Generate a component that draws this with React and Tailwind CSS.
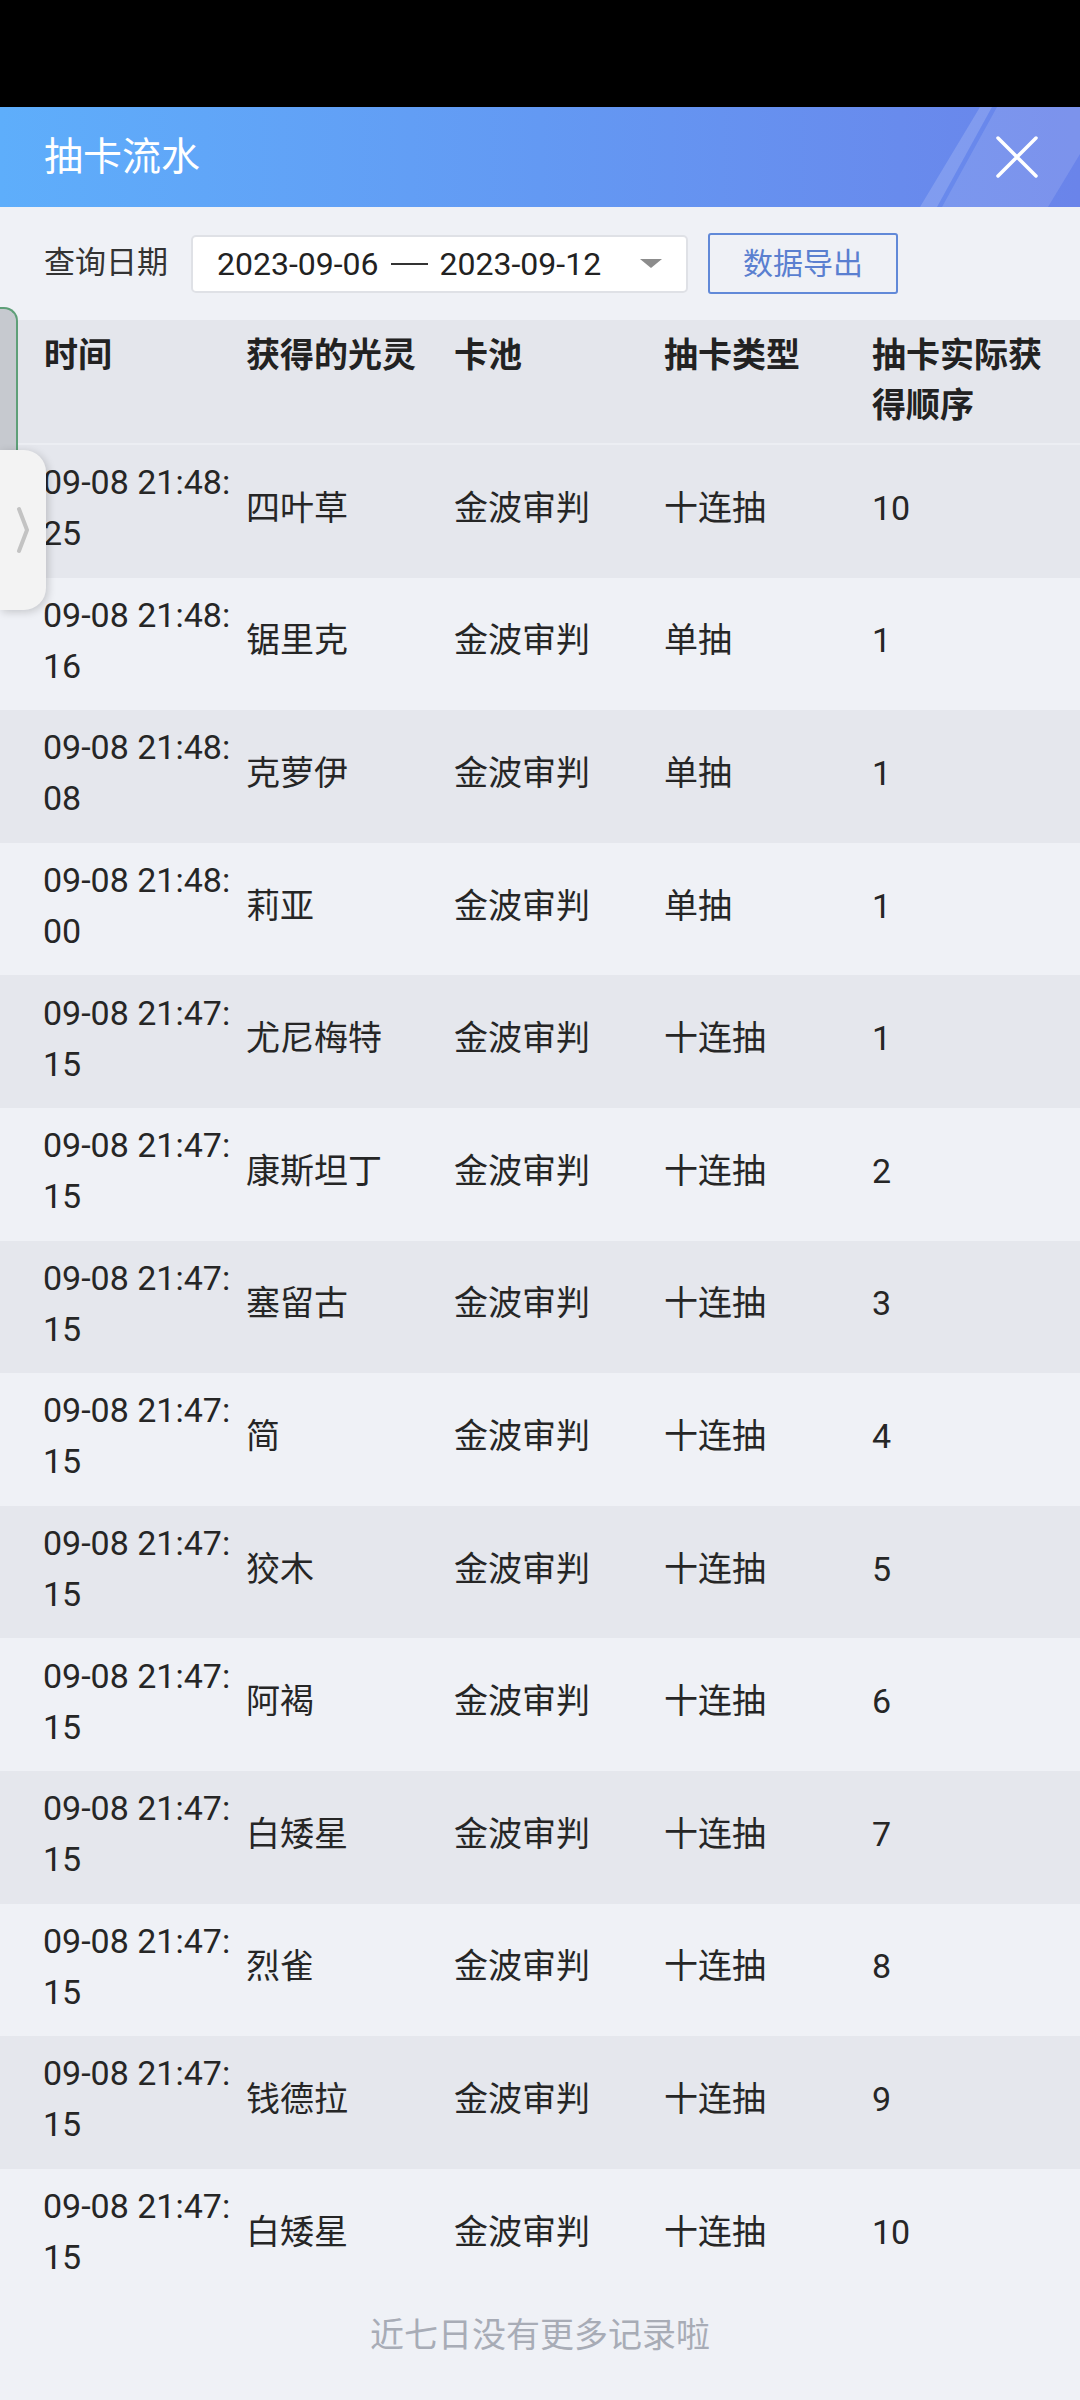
const rows = [
  ['09-08 21:48:', '25', '四叶草', '金波审判', '十连抽', '10'],
  ['09-08 21:48:', '16', '锯里克', '金波审判', '单抽', '1'],
  ['09-08 21:48:', '08', '克萝伊', '金波审判', '单抽', '1'],
  ['09-08 21:48:', '00', '莉亚', '金波审判', '单抽', '1'],
  ['09-08 21:47:', '15', '尤尼梅特', '金波审判', '十连抽', '1'],
  ['09-08 21:47:', '15', '康斯坦丁', '金波审判', '十连抽', '2'],
  ['09-08 21:47:', '15', '塞留古', '金波审判', '十连抽', '3'],
  ['09-08 21:47:', '15', '简', '金波审判', '十连抽', '4'],
  ['09-08 21:47:', '15', '狡木', '金波审判', '十连抽', '5'],
  ['09-08 21:47:', '15', '阿褐', '金波审判', '十连抽', '6'],
  ['09-08 21:47:', '15', '白矮星', '金波审判', '十连抽', '7'],
  ['09-08 21:47:', '15', '烈雀', '金波审判', '十连抽', '8'],
  ['09-08 21:47:', '15', '钱德拉', '金波审判', '十连抽', '9'],
  ['09-08 21:47:', '15', '白矮星', '金波审判', '十连抽', '10'],
]

const font = { fontFamily: 'Roboto, "Noto Sans CJK SC", sans-serif' }

export default function App() {
  return (
    <div className="relative w-[1080px] min-h-[2400px] bg-[#eff1f6] text-[#262626]" style={font}>
      {/* status bar */}
      <div className="h-[107px] bg-black" />

      {/* title bar */}
      <div className="relative h-[100px] flex items-center px-[44px] bg-linear-to-r from-[#5eaefb] via-[#6399f3] to-[#6a84ea] overflow-hidden">
        <svg className="absolute inset-0" width="1080" height="100" viewBox="0 0 1080 100">
          <polygon points="980,0 992,0 937,100 920,100" fill="#ffffff" fillOpacity="0.16" />
          <polygon points="997,0 1080,0 1080,47 1048,100 942,100" fill="#ffffff" fillOpacity="0.12" />
        </svg>
        <span className="relative text-[39px] text-white leading-none">抽卡流水</span>
        <svg className="absolute left-[995px] top-[28px]" width="44" height="44" viewBox="0 0 44 44">
          <path d="M3 3 L41 41 M41 3 L3 41" stroke="#ffffff" strokeWidth="3.5" strokeLinecap="round" />
        </svg>
      </div>

      {/* query row */}
      <div className="h-[113px] flex items-center pl-[44px]">
        <span className="text-[31px] text-[#333]">查询日期</span>
        <div className="ml-[23px] w-[497px] h-[58px] bg-white border-2 border-[#dfe1e6] rounded-[5px] flex items-center pl-[24px] pr-[24px]">
          <span className="flex items-center text-[32px] text-[#222] whitespace-nowrap">
            2023-09-06
            <span className="inline-block w-[37px] h-[2px] bg-[#333] mx-[12px]" />
            2023-09-12
          </span>
          <svg className="ml-auto" width="22" height="9" viewBox="0 0 22 9">
            <polygon points="0,0 22,0 11,9" fill="#8c8c8c" />
          </svg>
        </div>
        <div className="ml-[20px] w-[190px] h-[61px] border-2 border-[#6189d8] rounded-[3px] flex items-center justify-center text-[30px] text-[#5a7fd0]">
          数据导出
        </div>
      </div>

      {/* table header */}
      <div className="grid grid-cols-[202px_208px_210px_208px_1fr] pl-[44px] h-[125px] pt-[10px] bg-[#e4e6ec] border-b-2 border-[#eceef3] text-[34px] leading-[50px] font-semibold text-[#222]">
        <div>时间</div>
        <div>获得的光灵</div>
        <div>卡池</div>
        <div>抽卡类型</div>
        <div className="pr-[24px]">抽卡实际获得顺序</div>
      </div>

      {/* rows */}
      {rows.map((r, i) => (
        <div
          key={i}
          className={`grid grid-cols-[202px_208px_210px_208px_1fr] items-center pl-[44px] pb-[6px] h-[132.6px] text-[34px] leading-[51px] ${i % 2 === 0 ? 'bg-[#e5e7ed]' : 'bg-[#eff1f6]'}`}
        >
          <div className="whitespace-nowrap -ml-[1px]">
            <div>{r[0]}</div>
            <div>{r[1]}</div>
          </div>
          <div>{r[2]}</div>
          <div>{r[3]}</div>
          <div>{r[4]}</div>
          <div>{r[5]}</div>
        </div>
      ))}

      {/* footer */}
      <div className="h-[68px] flex items-center justify-center text-[34px] text-[#a8acb6]">近七日没有更多记录啦</div>

      {/* side handle */}
      <div className="absolute left-0 top-[307px] w-[18px] h-[150px] bg-[#c6c9cf] border-t-2 border-r-2 border-[#5e9f78] rounded-tr-[14px]" />
      <div className="absolute left-0 top-[450px] w-[46px] h-[160px] bg-[#f3f3f3] rounded-r-[22px] shadow-[2px_2px_8px_rgba(0,0,0,0.18)] flex items-center justify-center">
        <svg width="14" height="48" viewBox="0 0 14 48">
          <path d="M3 3 L11 24 L3 45" stroke="#c3c3c3" strokeWidth="4" fill="none" strokeLinecap="round" strokeLinejoin="round" />
        </svg>
      </div>
    </div>
  )
}
